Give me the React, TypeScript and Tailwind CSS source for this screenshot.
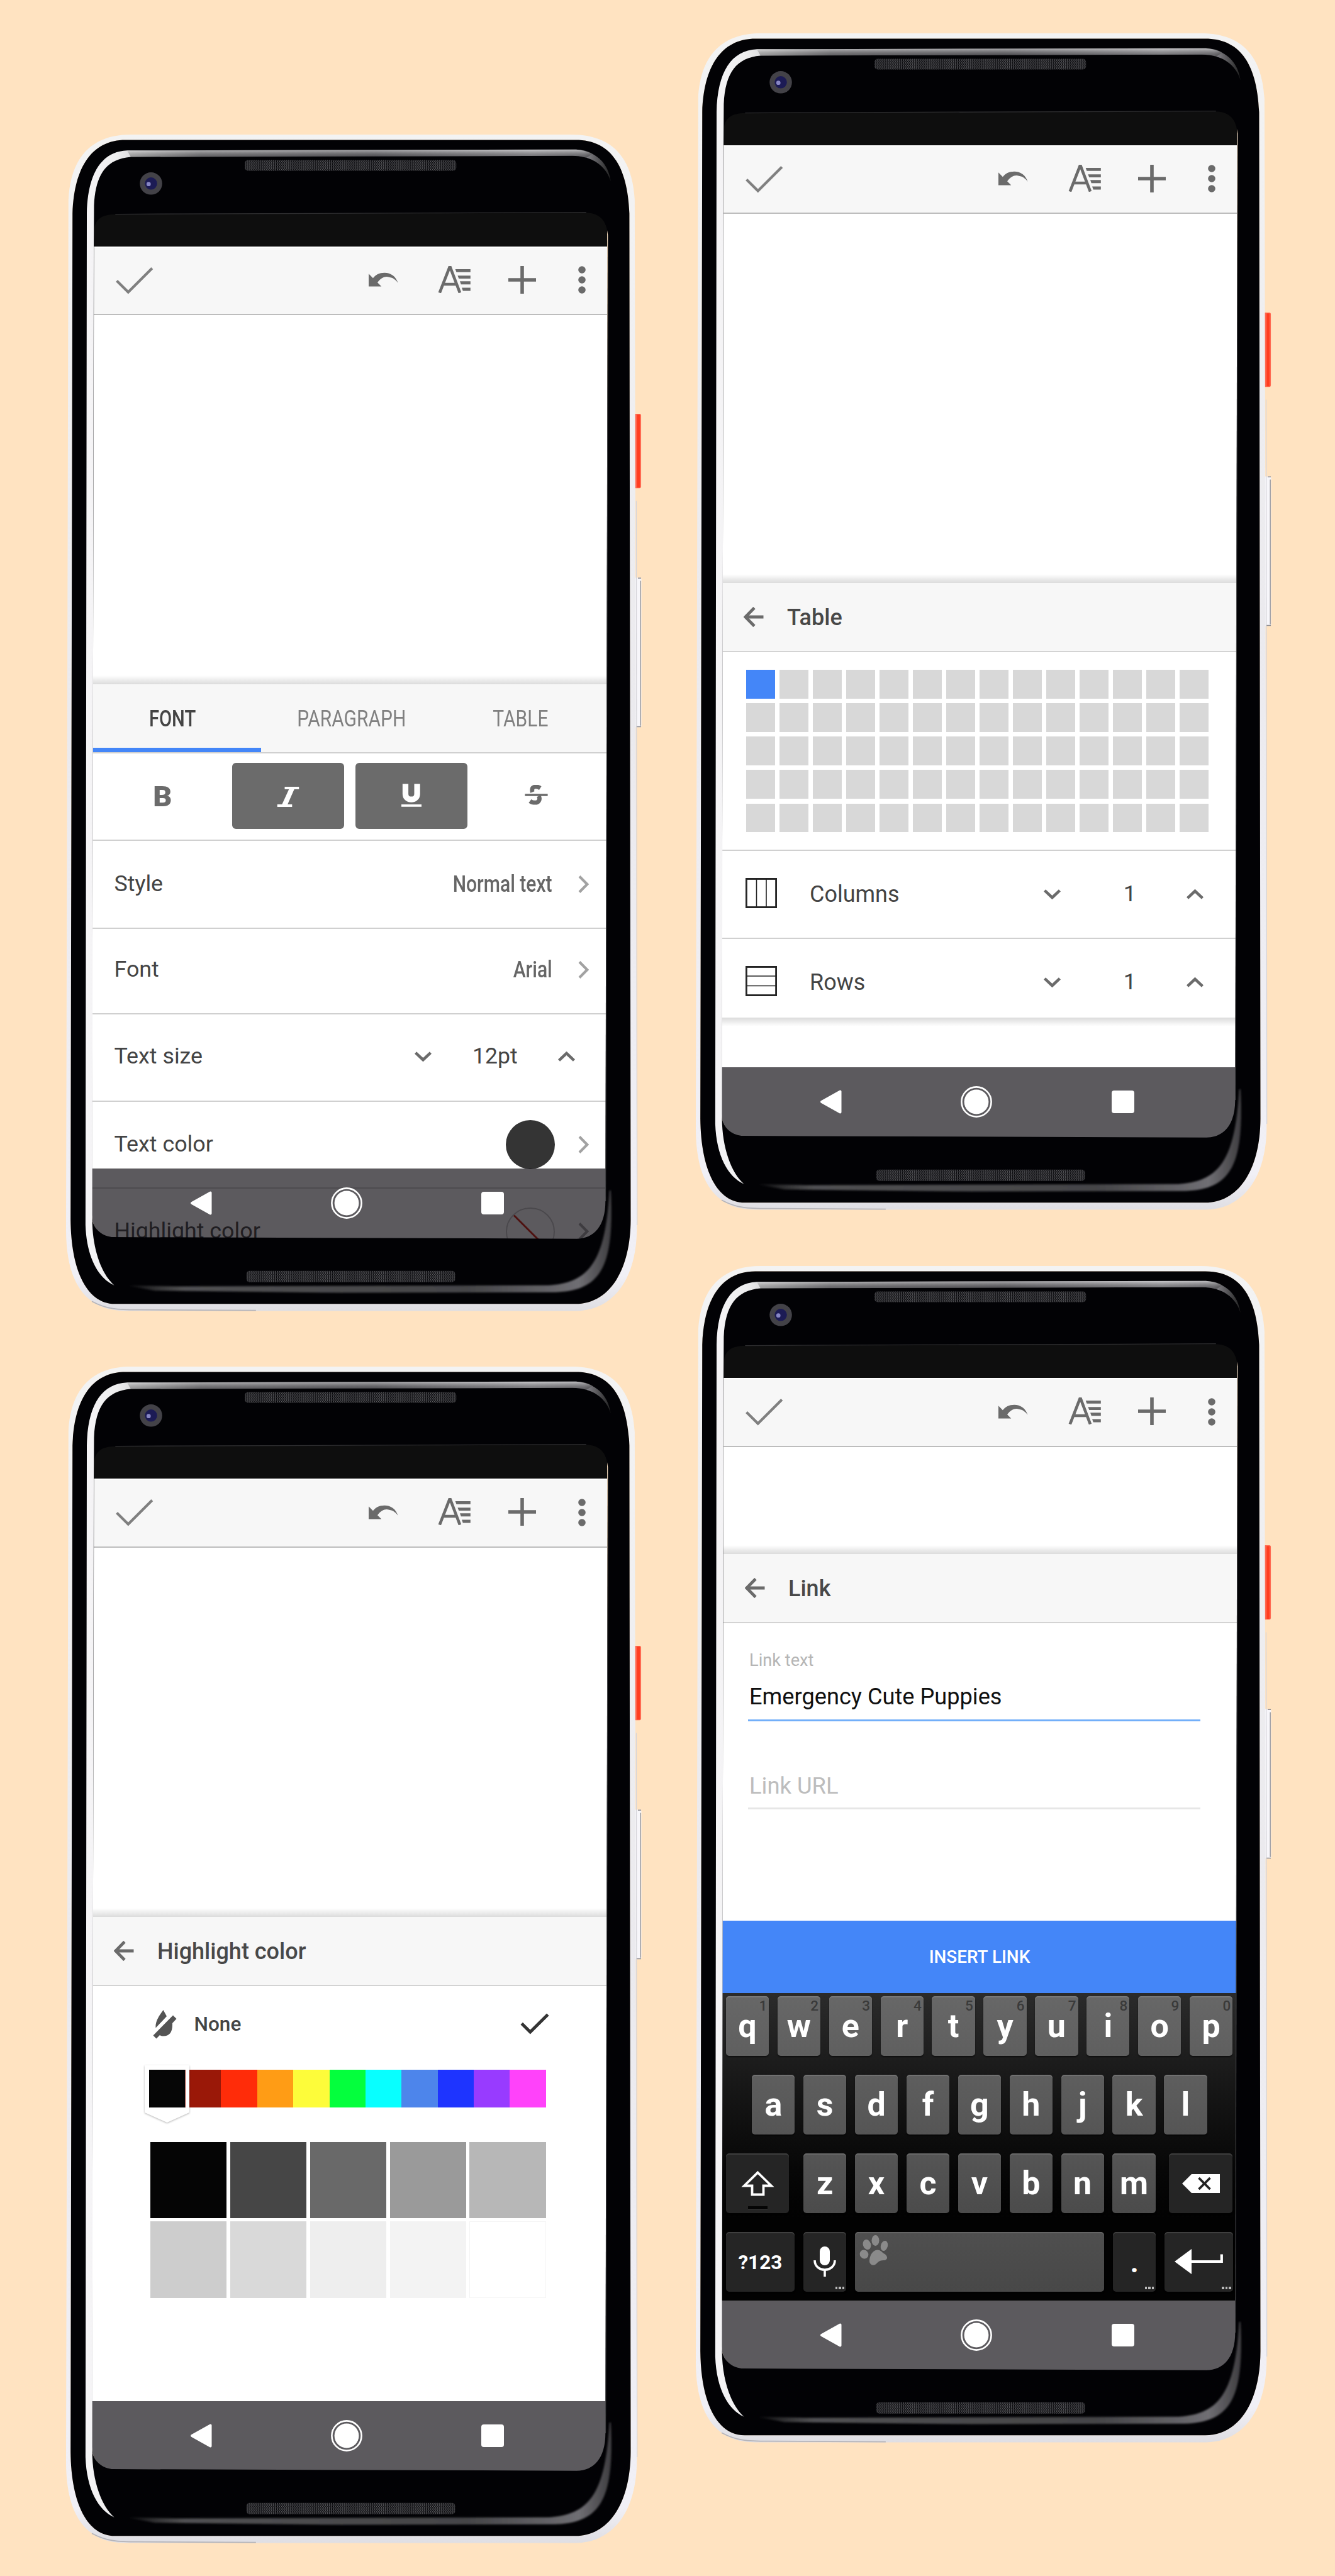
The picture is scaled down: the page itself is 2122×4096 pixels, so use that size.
import React from "react";

/* ---------- icons ---------- */

const AppBar = () => (
  <div className="flex h-[109.5px] shrink-0 items-center border-t-2 border-b-[2.5px] border-t-white border-b-[#bdbdbd] bg-[#f7f7f7] text-[#6b6b6b]">
    <svg className="ml-[38px] h-[43px] w-[60px]" viewBox="0 0 60 43" fill="none">
      <path d="M1.6 21.5 L19.8 39.5 L57.8 1.5" stroke="#808080" strokeWidth="4.2" />
    </svg>
    <svg className="mt-[-2px] ml-[342px] h-[24px] w-[47px]" viewBox="0 0 56 27" fill="currentColor">
      <path d="M0 2 V26 H24.2 L16.7 18.5 C24 8.5 32 6 39 8.5 C46 9.5 51 13 55.5 19.5 C52 7 42 0 30 0 C20 0 13 4 8.2 10.2 Z" />
    </svg>
    <svg className="mt-[-4px] ml-[63.5px] h-[43px] w-[52px]" viewBox="0 0 60 50" fill="none">
      <path d="M3 49.5 L21.3 2.5 H22.7 L40.5 49.5 M10.5 33.7 H33.5" stroke="currentColor" strokeWidth="5.4" />
      <path
        d="M32 5.8 H60 V11.4 H34 Z M36.3 17.8 H60 V23.4 H38.5 Z M40.5 28.3 H60 V34 H42.5 Z M44 40 H60 V45.8 H46 Z"
        fill="currentColor"
      />
    </svg>
    <svg className="mt-[-3px] ml-[59.5px] h-[44px] w-[44px]" viewBox="0 0 44 44">
      <path d="M0 22 H44 M22 0 V44" stroke="currentColor" strokeWidth="5.6" />
    </svg>
    <svg className="mt-[-2px] ml-[67px] h-[44px] w-[12px]" viewBox="0 0 12 44" fill="currentColor">
      <circle cx="6" cy="6" r="5.8" />
      <circle cx="6" cy="22" r="5.8" />
      <circle cx="6" cy="38" r="5.8" />
    </svg>
  </div>
);

const ChevronDown = () => (
  <svg className="h-[16px] w-[27px] shrink-0" viewBox="0 0 27 16" fill="none">
    <path d="M1.5 1.8 L13.5 13.2 L25.5 1.8" stroke="#6b6b6b" strokeWidth="4.6" />
  </svg>
);

const ChevronUp = () => (
  <svg className="h-[16px] w-[27px] shrink-0" viewBox="0 0 27 16" fill="none">
    <path d="M1.5 14.2 L13.5 2.8 L25.5 14.2" stroke="#6b6b6b" strokeWidth="4.6" />
  </svg>
);

const ChevronRight = () => (
  <svg className="mr-[28px] ml-[37px] h-[28px] w-[18px] shrink-0" viewBox="0 0 18 28" fill="none">
    <path d="M2 1.6 L14.3 14 L2 26.4" stroke="#a2a2a2" strokeWidth="4.2" />
  </svg>
);

const BackArrow = ({ inset = "ml-[34.5px]" }: { inset?: string }) => (
  <svg className={"h-[32px] w-[32px] shrink-0 " + inset} viewBox="0 0 32 32" fill="none">
    <path d="M31.5 16 H4 M17 1.5 L2.8 16 L17 30.5" stroke="#6b6b6b" strokeWidth="4.8" />
  </svg>
);

/* ---------- device ---------- */

const PhoneFrame = ({ id }: { id: string }) => (
  <svg className="pointer-events-none absolute inset-0 h-[1884px] w-[923px]" viewBox="120 245 1090 2225" fill="none">
    <defs>
      <linearGradient id={id + "-top"} x1="160" x2="1146" y1="0" y2="0" gradientUnits="userSpaceOnUse">
        <stop offset="0" stopColor="#f6f5f7" />
        <stop offset=".06" stopColor="#ededee" />
        <stop offset=".22" stopColor="#8b8a8f" />
        <stop offset=".55" stopColor="#6f6e74" />
        <stop offset=".85" stopColor="#a5a4aa" />
        <stop offset=".95" stopColor="#8b8a90" />
        <stop offset="1" stopColor="#222" />
      </linearGradient>
      <linearGradient id={id + "-shine"} x1="0" x2="0" y1="279" y2="294" gradientUnits="userSpaceOnUse">
        <stop offset="0" stopColor="#fff" stopOpacity=".55" />
        <stop offset="1" stopColor="#000" stopOpacity=".3" />
      </linearGradient>
      <linearGradient id={id + "-low"} x1="235" x2="1150" y1="0" y2="0" gradientUnits="userSpaceOnUse">
        <stop offset="0" stopColor="#666" stopOpacity="0" />
        <stop offset=".12" stopColor="#505052" />
        <stop offset=".7" stopColor="#444447" />
        <stop offset=".93" stopColor="#6f6e73" />
        <stop offset="1" stopColor="#3c3b3e" />
      </linearGradient>
      <linearGradient id={id + "-shell"} x1="0" x2="0" y1="252" y2="2461" gradientUnits="userSpaceOnUse">
        <stop offset="0" stopColor="#f3f3f3" />
        <stop offset=".5" stopColor="#ebeaee" />
        <stop offset=".97" stopColor="#f1f0f6" />
        <stop offset="1" stopColor="#dfdee3" />
      </linearGradient>
      <pattern id={id + "-mesh"} width="7" height="5" patternUnits="userSpaceOnUse">
        <path d="M1 0 L3 2.5 L1 5 M4.5 0 L6.5 2.5 L4.5 5" stroke="#6a6a6e" strokeWidth="1.2" />
      </pattern>
      <filter id={id + "-soft"} x="-10%" y="-10%" width="120%" height="120%">
        <feGaussianBlur stdDeviation="1.8" />
      </filter>
    </defs>

    {/* side buttons */}
    <rect x="1190" y="776.5" width="13" height="139.5" rx="3" fill="#ff6a52" />
    <rect x="1195" y="778" width="5.5" height="137" fill="#ff3d20" />
    <rect x="1190" y="1084" width="13.5" height="281" rx="3" fill="#f7f6fa" />
    <path d="M1202 1090 V1362" stroke="#a3a2a7" strokeWidth="2" />
    <path d="M1194 1364 H1203 M1197 1085 H1203" stroke="#8d8c91" strokeWidth="2" />

    {/* shell */}
    <path
      fillRule="evenodd"
      fill={`url(#${id}-shell)`}
      d="M245 252 H1071 C1140 252 1186 285 1191 375 L1195 2310 C1193 2415 1140 2461 1081 2461 H235 C165 2461 124 2415 123.5 2310 L128 375 C132 288 178 252 245 252 Z
         M235 262 C180 262 139 302 135.6 400 L132 2290 C133 2390 165 2448 215 2448 H1080 C1140 2448 1183 2390 1183.5 2290 L1181 400 C1177 302 1140 262 1080 262 Z"
    />
    <path d="M172 2443 C200 2458 220 2459 260 2459 L480 2460" stroke="#b5b4b9" strokeWidth="2" />
    <path d="M1194 940 L1195.5 2300" stroke="#d5d4d9" strokeWidth="1.5" />

    {/* glass with the display opening */}
    <path
      fillRule="evenodd"
      fill="#020205"
      d="M235 262 H1080 C1140 262 1177 302 1181 400 L1183.5 2290 C1183 2390 1140 2448 1080 2448 H215 C165 2448 133 2390 132 2290 L135.6 400 C139 302 180 262 235 262 Z
         M176 432 C178 411 190 402 216 402 L1100 398.7 C1125 400 1138 412 1140.5 440 L1136 2255 C1136 2302 1114 2325.5 1082 2325.5 L209 2322.5 C187 2319 174 2305 172 2285 Z"
    />
    <path d="M216 401.5 L1100 398.2" stroke="#2d2d2f" strokeWidth="1.5" />
    <path d="M1140.8 440 L1136.4 2255" stroke="#4a4a4c" strokeWidth="1.2" />

    {/* edge highlights */}
    <path
      fill={`url(#${id}-top)`}
      d="M1081 280 C1118 283 1141 305 1146 340 C1138 312 1112 292 1074 292 L245 294 C200 298 179 325 176 385 L175.5 462 L172.6 2290 C173 2345 190 2392 214 2413 C184 2400 162 2360 160 2300 L162.5 400 C164 325 190 284 238 282 Z"
    />
    <path fill={`url(#${id}-shine)`} d="M238 282 L1081 280 Q1100 281 1112 288 L1100 296 Q1090 292 1074 292 L245 294 Z" />
    <path
      filter={`url(#${id}-soft)`}
      fill={`url(#${id}-low)`}
      d="M236 2413 L330 2415 L1030 2413 C1105 2408 1136 2370 1143.5 2235 L1146 2235 C1153 2375 1130 2424 1040 2426 L640 2427 L290 2423 Z"
    />

    {/* speakers and camera */}
    <rect x="459" y="300" width="397" height="20" rx="6" fill={`url(#${id}-mesh)`} />
    <rect x="462" y="2386" width="392" height="21" rx="6" fill={`url(#${id}-mesh)`} />
    <circle cx="283" cy="344" r="21" fill="#434248" />
    <circle cx="283" cy="344" r="11.5" fill="#1c1b55" />
    <circle cx="278.5" cy="345" r="4" fill="#8786c4" />
  </svg>
);

const NavBar = () => (
  <div className="absolute inset-x-0 bottom-0 flex h-[113.5px] bg-[rgb(15_12_17/0.68)] pt-[34px]">
    <svg className="ml-[156px] h-[42px] w-[36px]" viewBox="0 0 36 42">
      <path d="M3 21 L32.5 4.5 V37.5 Z" fill="#fff" stroke="#fff" strokeWidth="4" strokeLinejoin="round" />
    </svg>
    <svg className="mt-[-4px] ml-[188px] h-[50px] w-[50px]" viewBox="0 0 50 50">
      <circle cx="25" cy="25" r="23.6" fill="none" stroke="#fff" strokeWidth="2.6" />
      <circle cx="25" cy="25" r="19.4" fill="#fff" />
    </svg>
    <div className="mt-[3px] ml-[189.5px] h-[36px] w-[36px] rounded-[4px] bg-white" />
  </div>
);

const Phone = ({ id, children }: { id: string; children: React.ReactNode }) => (
  <div className="relative h-[1884px] w-[923px] pt-[130px] pl-[44.4px]">
    <div className="relative flex h-[1634px] w-[819px] flex-col overflow-hidden rounded-b-[40px] bg-white">
      <div className="h-[54px] shrink-0 bg-[#0e0e0e]" />
      <AppBar />
      {children}
      <NavBar />
    </div>
    <PhoneFrame id={id} />
  </div>
);

/* ---------- shared panel parts ---------- */

const PanelEdge = () => <div className="mt-auto h-[14px] bg-linear-to-b from-black/0 to-black/14" />;

const PanelHeader = ({ title, inset }: { title: string; inset?: string }) => (
  <div className="flex h-[110px] shrink-0 items-center border-b-[2.5px] border-[#d3d3d3] bg-[#f7f7f7]">
    <BackArrow inset={inset} />
    <span className="mt-[2px] ml-[37px] text-[36px] leading-none font-medium text-[#484848]">{title}</span>
  </div>
);

const Stepper = ({ value, offset = "" }: { value: string; offset?: string }) => (
  <div className="ml-auto flex items-center">
    <ChevronDown />
    <span className={"w-[200.5px] text-center text-[35.6px] leading-none text-[#444] " + offset}>{value}</span>
    <ChevronUp />
  </div>
);

const label = "ml-[35.5px] text-[35.8px] leading-none text-[#444]";
const value = "mr-[4px] ml-auto origin-right scale-x-[0.82] text-[36.7px] leading-none text-[#666] font-medium";
const row = "flex shrink-0 items-center border-b-[2.5px] border-[#d0d0d0]";

/* ---------- font panel ---------- */

const FontScreen = () => (
  <Phone id="font">
    <div className="flex h-[587px] shrink-0 flex-col">
      <PanelEdge />
    </div>
    <div className="relative flex h-[109.5px] shrink-0 items-center border-b-[2.5px] border-[#d0d0d0] bg-[#f7f7f7] pt-[2px] text-[37px] leading-none">
      <div className="flex w-[257px] justify-center">
        <span className="scale-x-[0.79] font-medium text-[#444]">FONT</span>
      </div>
      <div className="flex w-[311px] justify-center text-[#808080]">
        <span className="scale-x-[0.81]">PARAGRAPH</span>
      </div>
      <div className="flex w-[226px] justify-center text-[#808080]">
        <span className="scale-x-[0.81]">TABLE</span>
      </div>
      <div className="absolute bottom-0 left-0 h-[7px] w-[269px] bg-[#4486f8]" />
    </div>
    <div className="flex h-[139.5px] shrink-0 border-b-[2.5px] border-[#d0d0d0] pt-[15px] text-[#6b6b6b]">
      <div className="ml-[23px] flex h-[105px] w-[178px] items-center justify-center">
        <span className="mt-[5px] scale-x-[1.05] text-[44.5px] leading-none font-black">B</span>
      </div>
      <div className="ml-[22px] flex h-[105px] w-[178px] items-center justify-center rounded-[6px] bg-[#6b6b6b]">
        <svg className="mt-[4px] h-[32px] w-[36px]" viewBox="0 0 41 38" fill="#fff">
          <path d="M14 0 H41 V4.8 H32 L19.5 33.2 H28 V38 H0 V33.2 H9 L22 4.8 H14 Z" />
        </svg>
      </div>
      <div className="ml-[18.5px] flex h-[105px] w-[178px] items-center justify-center rounded-[6px] bg-[#6b6b6b]">
        <svg className="mt-[-2px] h-[37px] w-[32px]" viewBox="0 0 38 43" fill="none" stroke="#fff">
          <path d="M7.7 0 V19 C7.7 33 29.8 33 29.8 19 V0" strokeWidth="11" />
          <path d="M0 41 H38" strokeWidth="4.4" />
        </svg>
      </div>
      <div className="ml-[20px] flex h-[105px] w-[178px] items-center justify-center">
        <svg className="mt-[-2px] h-[32px] w-[37px]" viewBox="0 0 43 38" fill="none" stroke="currentColor">
          <path d="M29 6 C22 1.5 13.5 3 13.5 9.5 C13.5 11 13.6 12.2 14.2 13.6" strokeWidth="8" />
          <path d="M26 21 C30 28 25 34 19 33.5 C14 33.5 11.5 32 9.5 30.5" strokeWidth="8" />
          <path d="M0 19 H43" strokeWidth="4.4" />
        </svg>
      </div>
    </div>
    <div className={row + " h-[140px]"}>
      <span className={label}>Style</span>
      <span className={value}>Normal text</span>
      <ChevronRight />
    </div>
    <div className={row + " h-[136px] pb-[4px]"}>
      <span className={label}>Font</span>
      <span className={value}>Arial</span>
      <ChevronRight />
    </div>
    <div className={row + " h-[138.5px] pr-[51px] pb-[3px]"}>
      <span className={label}>Text size</span>
      <Stepper value="12pt" />
    </div>
    <div className={row + " h-[138.5px]"}>
      <span className={label}>Text color</span>
      <div className="ml-auto h-[77.5px] w-[77.5px] rounded-full bg-[#343434]" />
      <ChevronRight />
    </div>
    <div className={row + " h-[138.5px]"}>
      <span className={label}>Highlight color</span>
      <div className="ml-auto flex h-[77.5px] w-[77.5px] items-center justify-center overflow-hidden rounded-full border-[2px] border-[#c8c8c8]">
        <div className="h-[3px] w-[80px] shrink-0 rotate-45 bg-[#d42010]" />
      </div>
      <ChevronRight />
    </div>
  </Phone>
);

/* ---------- table panel ---------- */

const TableScreen = () => (
  <Phone id="table">
    <div className="flex h-[587px] shrink-0 flex-col">
      <PanelEdge />
    </div>
    <PanelHeader title="Table" />
    <div className="grid h-[315.5px] shrink-0 grid-cols-[repeat(14,45.6px)] content-start gap-x-[7.4px] gap-y-[7.55px] border-b-[2.5px] border-[#d0d0d0] pt-[28px] pl-[39px]">
      {Array.from({ length: 70 }, (_, i) => (
        <div key={i} className={"h-[45.6px] " + (i === 0 ? "bg-[#4486f8]" : "bg-[#d8d8d8]")} />
      ))}
    </div>
    <div className={row + " h-[140.5px] pr-[53.4px]"}>
      <svg className="mt-[-3px] ml-[38px] h-[48px] w-[50px]" viewBox="0 0 50 48" fill="none" stroke="#242424">
        <rect x="1.3" y="1.4" width="47.4" height="45.2" strokeWidth="3" />
        <path d="M17.5 2 V46 M33 2 V46" strokeWidth="1.6" />
      </svg>
      <span className="ml-[51.5px] text-[36px] leading-none text-[#444]">Columns</span>
      <Stepper value="1" offset="pl-[20px]" />
    </div>
    <div className="flex h-[125px] shrink-0 items-center pt-[13px] pr-[53.4px]">
      <svg className="mt-[-5px] ml-[38px] h-[48px] w-[50px]" viewBox="0 0 50 48" fill="none" stroke="#242424">
        <rect x="1.3" y="1.4" width="47.4" height="45.2" strokeWidth="3" />
        <path d="M2 16 H48 M2 31.5 H48" strokeWidth="1.6" />
      </svg>
      <span className="ml-[51.5px] text-[36px] leading-none text-[#444]">Rows</span>
      <Stepper value="1" offset="pl-[20px]" />
    </div>
    <div className="h-[14px] shrink-0 bg-linear-to-b from-black/14 to-black/0" />
  </Phone>
);

/* ---------- highlight colour panel ---------- */

const HUES = [
  "bg-[#060606]", "bg-[#9a1808]", "bg-[#ff2c09]", "bg-[#ff9c15]", "bg-[#fdfc3a]", "bg-[#04ff3d]",
  "bg-[#08ffff]", "bg-[#4d85eb]", "bg-[#1e34ff]", "bg-[#983bff]", "bg-[#ff42fa]",
];

const SHADES = [
  "bg-[#050505]", "bg-[#464646]", "bg-[#696969]", "bg-[#9a9a9a]", "bg-[#b7b7b7]",
  "bg-[#cdcdcd]", "bg-[#d9d9d9]", "bg-[#eeeeee]", "bg-[#f3f3f3]", "bg-white",
];

const HighlightScreen = () => (
  <Phone id="highlight">
    <div className="flex h-[587px] shrink-0 flex-col">
      <PanelEdge />
    </div>
    <PanelHeader title="Highlight color" inset="ml-[35px]" />
    <div className="flex h-[122px] shrink-0 items-center">
      <svg className="ml-[97px] h-[46px] w-[38px]" viewBox="0 0 38 46">
        <path
          d="M16.5 0 L22 10 L4.5 28.5 C3.5 18 10 9 16.5 0 Z M32 8.5 L37.5 14 L31 21 C31.5 36 26 41.5 17 41.5 C14.5 41.5 12.5 41 11 40 L5.5 45.5 L0.5 40.5 Z"
          fill="#545454"
        />
      </svg>
      <span className="ml-[27.5px] text-[31.6px] leading-none font-medium text-[#444]">None</span>
      <svg className="ml-auto mr-[92px] h-[35px] w-[46px]" viewBox="0 0 46 35" fill="none">
        <path d="M2.2 16.5 L15.8 30 L43.8 2.2" stroke="#343434" strokeWidth="5" />
      </svg>
    </div>
    <div className="mt-[11px] ml-[90.6px] flex h-[60.6px] shrink-0">
      {HUES.map((hue, i) => (
        <div key={hue} className={"relative w-[57.4px] " + hue}>
          {i === 0 && (
            <svg className="absolute -top-[8px] -left-[8px] z-10 h-[96px] w-[74px] drop-shadow-[0_1px_1.5px_rgba(0,0,0,0.3)]" viewBox="0 0 74 96">
              <path fillRule="evenodd" fill="#fff" d="M1 1 H72 V76 L36.5 92 L1 76 Z M8 8 V68.6 H65.8 V8 Z" />
            </svg>
          )}
        </div>
      ))}
    </div>
    <div className="mt-[54.5px] ml-[93.2px] grid shrink-0 grid-cols-[repeat(5,121.3px)] gap-[5.5px]">
      {SHADES.map((shade, i) => (
        <div key={shade} className={"h-[121.3px] " + shade + (i === 9 ? " border border-[#f4f4f4]" : "")} />
      ))}
    </div>
  </Phone>
);

/* ---------- link panel with keyboard ---------- */

const Key = ({ children, tone, hint, more, width = "w-[68.3px]" }: {
  children?: React.ReactNode; tone: string; hint?: string; more?: boolean; width?: string;
}) => (
  <div
    className={
      "relative flex h-[94.5px] shrink-0 items-center justify-center rounded-[5px] shadow-[inset_0_2px_0_rgba(255,255,255,0.12),0_2px_2px_rgba(0,0,0,0.5)] " +
      width + " " + tone
    }
  >
    {children}
    {hint && <span className="absolute top-[4px] right-[3px] text-[22.5px] leading-none font-medium text-[#3a3a3a]">{hint}</span>}
    {more && (
      <div className="absolute right-[3px] bottom-[4px] flex gap-[2px]">
        <div className="size-[3.5px] bg-[#bbb]" />
        <div className="size-[3.5px] bg-[#bbb]" />
        <div className="size-[3.5px] bg-[#bbb]" />
      </div>
    )}
  </div>
);

const Letter = ({ children }: { children: string }) => (
  <span className="mt-[2px] text-[52px] leading-none font-bold text-white">{children}</span>
);

const DARK = "bg-[#252525]";

const Keyboard = () => (
  <div className="flex h-[600px] shrink-0 flex-col gap-[30.5px] bg-linear-to-b from-[#2b2b2b] from-0% to-[#020202] to-60% pt-[5px] pl-[6.4px]">
    <div className="flex gap-[13.6px]">
      {"qwertyuiop".split("").map((c, i) => (
        <Key key={c} tone="bg-linear-to-b from-[#676767] to-[#5f5f5f]" hint={String((i + 1) % 10)}>
          <Letter>{c}</Letter>
        </Key>
      ))}
    </div>
    <div className="flex gap-[13.6px] pl-[41.3px]">
      {"asdfghjkl".split("").map((c) => (
        <Key key={c} tone="bg-linear-to-b from-[#5e5e5e] to-[#555555]">
          <Letter>{c}</Letter>
        </Key>
      ))}
    </div>
    <div className="flex gap-[13.6px]">
      <Key width="w-[100.4px] mr-[9.2px]" tone={DARK}>
        <svg className="mt-[1px] h-[41px] w-[53px]" viewBox="0 0 53 41" fill="none">
          <path d="M26.5 3.5 L48 24.5 H35.5 V38.5 H17.5 V24.5 H5 Z" stroke="#fff" strokeWidth="3.8" />
        </svg>
        <div className="absolute bottom-[5px] h-[6px] w-[31px] border-b border-[#3a3a3a] bg-[#050505]" />
      </Key>
      {"zxcvbnm".split("").map((c) => (
        <Key key={c} tone="bg-linear-to-b from-[#555555] to-[#4b4b4b]">
          <Letter>{c}</Letter>
        </Key>
      ))}
      <Key width="w-[101px] ml-[7.9px]" tone={DARK}>
        <svg className="mt-[1px] h-[30px] w-[60px]" viewBox="0 0 60 30">
          <path d="M0 15 L15 0 H60 V30 H15 Z" fill="#fff" />
          <path d="M26.5 6 L44.5 24 M44.5 6 L26.5 24" stroke="#222" strokeWidth="3.8" />
        </svg>
      </Key>
    </div>
    <div className="flex gap-[13.6px]">
      <Key width="w-[109px] mr-[0.6px]" tone={DARK}>
        <span className="mt-[2px] text-[31.5px] leading-none font-bold text-white">?123</span>
      </Key>
      <Key tone={DARK} more>
        <svg className="h-[48px] w-[36px]" viewBox="0 0 36 48" fill="none">
          <rect x="10" y="0" width="16" height="30" rx="8" fill="#fff" />
          <path d="M2 22 C2 42 34 42 34 22 M18 37 V48" stroke="#fff" strokeWidth="3.6" />
        </svg>
      </Key>
      <Key width="w-[396.5px]" tone="bg-linear-to-b from-[#4f4f4f] to-[#484848]">
        <svg className="absolute top-[5px] left-[7px] h-[48px] w-[46px]" viewBox="0 0 46 48" fill="#8a8a8a">
          <ellipse cx="25.5" cy="8.5" rx="6" ry="8.5" />
          <ellipse cx="12" cy="15" rx="6.2" ry="8.2" transform="rotate(-18 12 15)" />
          <ellipse cx="39.5" cy="17" rx="5.5" ry="8.2" transform="rotate(14 39.5 17)" />
          <ellipse cx="7.5" cy="30.5" rx="6.6" ry="7.2" transform="rotate(-40 7.5 30.5)" />
          <path d="M28 23.5 C33 23 35.5 26.5 38.5 29 C44 31.5 47 38 40 40 C34 40 31 41 27 45.5 C22 50 16 47 16 41 C16 34 20 24.5 28 23.5 Z" />
        </svg>
      </Key>
      <Key tone={DARK} more>
        <span className="mt-[2px] text-[46px] leading-none font-bold text-white">.</span>
      </Key>
      <Key width="w-[109px]" tone={DARK} more>
        <svg className="h-[40px] w-[77px]" viewBox="0 0 77 40" fill="none">
          <path d="M0 20 L27 0 V40 Z" fill="#fff" />
          <path d="M25 20 H74.8 V8.5" stroke="#fff" strokeWidth="4.2" />
        </svg>
      </Key>
    </div>
  </div>
);

const LinkScreen = () => (
  <Phone id="link">
    <div className="flex h-[170.5px] shrink-0 flex-col">
      <PanelEdge />
    </div>
    <PanelHeader title="Link" inset="ml-[36.5px]" />
    <div className="flex h-[473px] shrink-0 flex-col px-[42px] pt-[45px]">
      <span className="pl-[1.5px] text-[27.2px] leading-[28px] text-[#b5b5b5]">Link text</span>
      <div className="mt-[24px] w-[719px] border-b-[3.4px] border-[#72aff9] pb-[15.5px] pl-[1.5px] text-[36.2px] leading-[40px] text-[#101010]">
        Emergency Cute Puppies
      </div>
      <div className="mt-[83px] w-[719px] border-b-[3.2px] border-[#e6e6e6] pb-[14px] pl-[1.5px] text-[36.4px] leading-[40px] text-[#bdbdbd]">
        Link URL
      </div>
    </div>
    <div className="flex h-[115px] shrink-0 items-center justify-center bg-[#4486f8] text-[27.9px] leading-none font-medium text-white">
      INSERT LINK
    </div>
    <div className="h-[489px] shrink-0 overflow-hidden">
      <Keyboard />
    </div>
    <div className="h-[3px] shrink-0 bg-white" />
  </Phone>
);

export default function App() {
  return (
    <main className="flex h-[4096px] w-[2122px] gap-[78.5px] overflow-hidden bg-[#ffe3c1] pl-[101.6px] font-['Roboto',sans-serif]">
      <div className="flex flex-col gap-[75.5px] pt-[207.5px]">
        <FontScreen />
        <HighlightScreen />
      </div>
      <div className="flex flex-col gap-[76.5px] pt-[46.5px]">
        <TableScreen />
        <LinkScreen />
      </div>
    </main>
  );
}
